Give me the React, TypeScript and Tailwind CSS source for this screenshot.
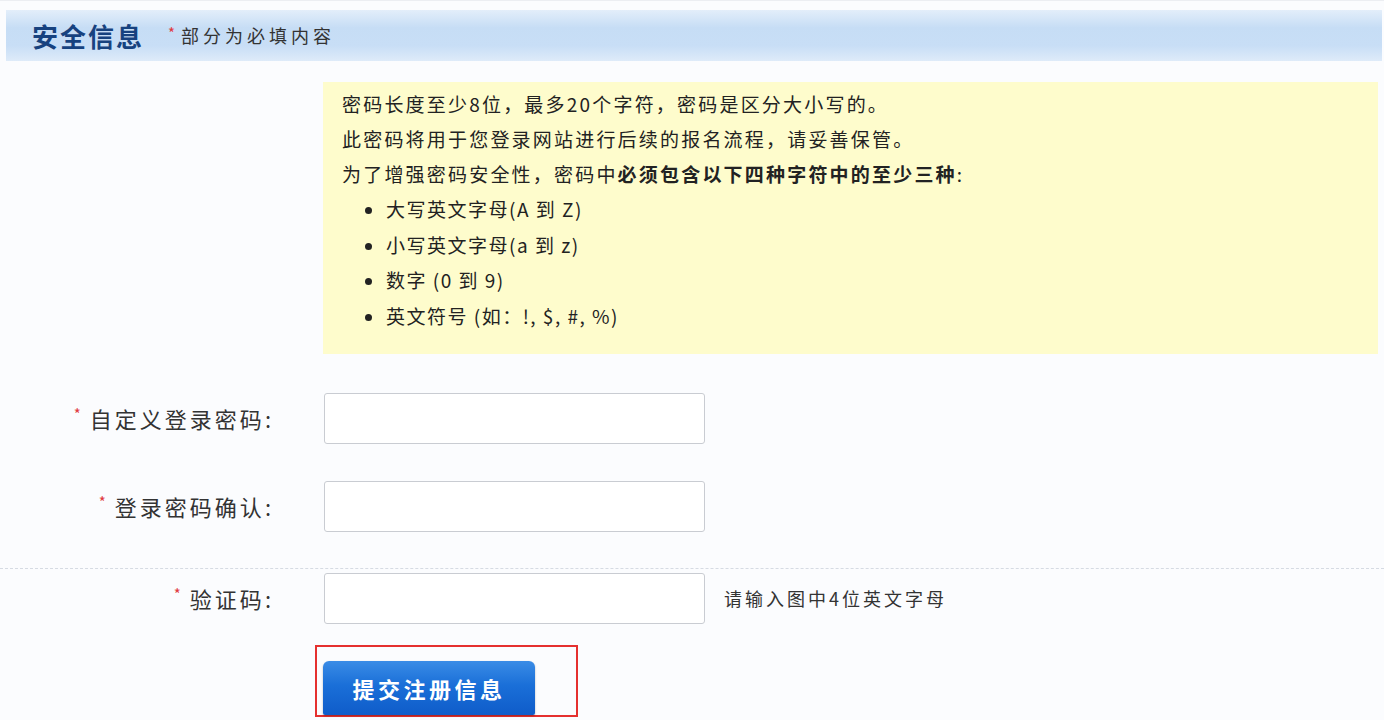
const font = { fontFamily: '"Noto Sans CJK SC", "Liberation Sans", sans-serif' };

const Star = () => <span className="text-[#e0393e] text-[15px] mr-[6px] relative -top-[4px]">*</span>;

const FieldRow = ({ label, children }: { label: string; children?: React.ReactNode }) => (
  <div className="flex items-center">
    <div className="w-[324px] shrink-0 pr-[50px] flex justify-end items-center text-[22px] tracking-[3px] text-[#333]">
      <Star />
      <span>{label}:</span>
    </div>
    <input className="w-[381px] h-[51px] border border-[#c9ccd2] rounded-[3px] bg-white outline-none" />
    {children}
  </div>
);

export default function App() {
  return (
    <div className="w-[1384px] h-[720px] bg-[#fbfcfe] overflow-hidden" style={font}>
      <div className="h-[10px] border-t border-[#eceef2]" />
      <div className="mx-[6px] mr-[2px] h-[51px] flex items-center bg-[linear-gradient(to_bottom,#e3eefa,#c6ddf5_35%,#c8def6_70%,#deebf9)]">
        <h1 className="ml-[26px] text-[26px] font-bold text-[#17427f] tracking-[2px]">安全信息</h1>
        <span className="ml-[24px] text-[#e0393e] text-[15px] relative -top-[2px]">*</span>
        <span className="ml-[6px] text-[18px] tracking-[4px] text-[#333]">部分为必填内容</span>
      </div>

      <div className="ml-[323px] mr-[6px] mt-[21px] h-[272px] bg-[#fefccc] pl-[19px] pt-[4px] text-[19px] tracking-[2.2px] text-[#222] leading-[35px]">
        <p>密码长度至少8位，最多20个字符，密码是区分大小写的。</p>
        <p>此密码将用于您登录网站进行后续的报名流程，请妥善保管。</p>
        <p>
          为了增强密码安全性，密码中<b className="font-bold">必须包含以下四种字符中的至少三种</b>:
        </p>
        <ul className="list-disc pl-[44px] leading-[35.5px] tracking-[1.5px]">
          <li>大写英文字母(A 到 Z)</li>
          <li>小写英文字母(a 到 z)</li>
          <li>数字 (0 到 9)</li>
          <li>英文符号 (如：!, $, #, %)</li>
        </ul>
      </div>

      <div className="mt-[39px] flex flex-col gap-[37px]">
        <FieldRow label="自定义登录密码" />
        <FieldRow label="登录密码确认" />
      </div>

      <div className="mt-[36px] border-t border-dashed border-[#d6dbe3]" />
      <div className="mt-[4px]">
        <FieldRow label="验证码">
          <span className="ml-[19px] text-[18px] tracking-[3px] text-[#333]">请输入图中4位英文字母</span>
        </FieldRow>
      </div>

      <div className="ml-[315px] mt-[21px] w-[263px] h-[72px] border-2 border-[#e5302f] pl-[6px] pt-[14px]">
        <button className="w-[212px] h-[54px] rounded-t-[6px] rounded-b-[2px] bg-[linear-gradient(to_bottom,#3a8ce6,#1a6fd8_45%,#0f5cc9)] text-white text-[22px] font-bold tracking-[3.5px] shadow-[0_1px_2px_rgba(0,0,0,0.3)]">
          提交注册信息
        </button>
      </div>
    </div>
  );
}
